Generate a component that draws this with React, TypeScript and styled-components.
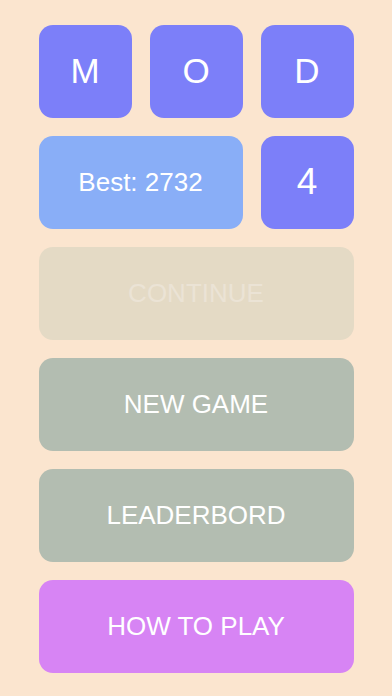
import React from "react";
import styled, { createGlobalStyle } from "styled-components";

const GlobalStyle = createGlobalStyle`
  html, body {
    margin: 0;
    padding: 0;
    background: #fbe5cf;
  }
  body {
    font-family: "Liberation Sans", Arial, sans-serif;
  }
`;

const Screen = styled.div`
  width: 392px;
  height: 696px;
  box-sizing: border-box;
  padding: 25px 38.5px 0;
  background: #fbe5cf;
  display: grid;
  grid-template-columns: repeat(3, 93px);
  grid-auto-rows: 93px;
  gap: 18px;
  align-content: start;
`;

const Tile = styled.div<{ $bg: string; $span?: number; $size?: number; $color?: string }>`
  grid-column: span ${(p) => p.$span ?? 1};
  background: ${(p) => p.$bg};
  border-radius: 14px;
  display: flex;
  align-items: center;
  justify-content: center;
  padding-bottom: 2px;
  box-sizing: border-box;
  color: ${(p) => p.$color ?? "#ffffff"};
  font-size: ${(p) => p.$size ?? 26}px;
  line-height: 1;
  user-select: none;
`;

const MenuButton = styled(Tile).attrs({ as: "button" })`
  border: none;
  font-family: inherit;
  cursor: pointer;
`;

export default function App() {
  return (
    <>
      <GlobalStyle />
      <Screen>
        <Tile $bg="#7c7ff9" $size={35}>M</Tile>
        <Tile $bg="#7c7ff9" $size={35}>O</Tile>
        <Tile $bg="#7c7ff9" $size={35}>D</Tile>

        <Tile $bg="#89aef7" $span={2} $size={26}>Best: 2732</Tile>
        <Tile $bg="#7c7ff9" $size={37}>4</Tile>

        <MenuButton $bg="#e4dac5" $span={3} $color="#ebe3d5">CONTINUE</MenuButton>
        <MenuButton $bg="#b3bdb1" $span={3}>NEW GAME</MenuButton>
        <MenuButton $bg="#b3bdb1" $span={3}>LEADERBORD</MenuButton>
        <MenuButton $bg="#d784f4" $span={3}>HOW TO PLAY</MenuButton>
      </Screen>
    </>
  );
}
